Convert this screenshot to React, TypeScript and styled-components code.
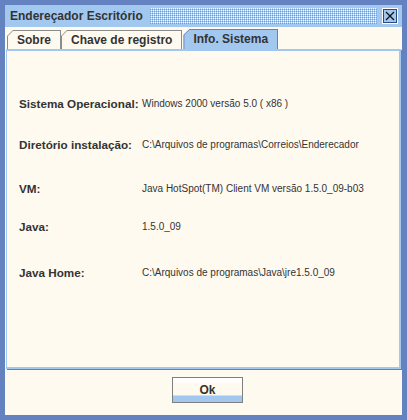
import React from 'react';
import styled, { createGlobalStyle } from 'styled-components';

const C = {
  frame: '#6382BF',
  light: '#A3C8F0',
  cream: '#FFFAEF',
  text: '#333333',
  gray: '#808080',
  tabBorder: '#8C8C8C',
};

const Global = createGlobalStyle`
  html, body { margin: 0; padding: 0; background: #ffffff; }
  body { font-family: "Liberation Sans", Arial, sans-serif; color: ${C.text}; }
`;

const Window = styled.div`
  width: 407px;
  height: 420px;
  box-sizing: border-box;
  background: ${C.frame};
  padding: 5px;
  display: flex;
  flex-direction: column;
`;

const TitleBar = styled.div`
  height: 22px;
  flex: none;
  background: ${C.light};
  display: flex;
  align-items: center;
  padding: 0 4px 0 5px;
`;

const Title = styled.span`
  font-weight: bold;
  font-size: 12px;
  color: ${C.text};
  white-space: nowrap;
`;

const Grip = styled.div`
  flex: 1;
  height: 16px;
  margin: 0 5px 0 7px;
  background: conic-gradient(#ffffff 25%, ${C.light} 0 50%, #7d9fd6 0 75%, ${C.light} 0) 0 0 / 2px 2px;
`;

const CloseButton = styled.div`
  width: 16px;
  height: 16px;
  box-sizing: border-box;
  border: 1px solid #ffffff;
  display: flex;
`;

const CloseInner = styled.div`
  flex: 1;
  border: 1px solid #2b4a7e;
  background: ${C.light};
  display: flex;
  align-items: center;
  justify-content: center;
`;

const Body = styled.div`
  flex: 1;
  background: ${C.cream};
  display: flex;
  flex-direction: column;
`;

const TabRow = styled.div`
  height: 20px;
  margin-top: 2px;
  padding-left: 2px;
  display: flex;
  align-items: flex-end;
  flex: none;
`;

const Tab = styled.div<{ $active?: boolean; $gap?: number }>`
  position: relative;
  height: ${(p) => (p.$active ? 20 : 19)}px;
  margin-left: ${(p) => p.$gap ?? 0}px;
  padding: 0 10px;
  display: flex;
  align-items: center;
  font-weight: bold;
  font-size: 12px;
  color: ${C.text};
  background: ${(p) => (p.$active ? C.frame : C.tabBorder)};
  clip-path: polygon(0 6px, 6px 0, 100% 0, 100% 100%, 0 100%);
  &::before {
    content: '';
    position: absolute;
    inset: 1px 1px 0 1px;
    background: ${(p) => (p.$active ? C.light : C.cream)};
    clip-path: polygon(0 5px, 5px 0, 100% 0, 100% 100%, 0 100%);
  }
`;

const TabLabel = styled.span`
  position: relative;
  white-space: nowrap;
`;

const Panel = styled.div`
  flex: 1;
  margin: 0 1px 1px 1px;
  border-top: 2px solid ${C.light};
  border-left: 1px solid ${C.light};
  border-right: 2px solid ${C.light};
  border-bottom: 2px solid ${C.light};
  box-shadow: 1px 1px 0 ${C.gray};
  padding-left: 12px;
  display: flex;
  flex-direction: column;
`;

const Row = styled.div<{ $gap: number }>`
  display: grid;
  grid-template-columns: 123px 1fr;
  align-items: center;
  height: 14px;
  line-height: 14px;
  margin-top: ${(p) => p.$gap}px;
`;

const Label = styled.span`
  font-weight: bold;
  font-size: 11.7px;
  color: ${C.text};
  white-space: nowrap;
`;

const Value = styled.span`
  font-size: 10px;
  color: ${C.text};
  white-space: nowrap;
`;

const Footer = styled.div`
  height: 45px;
  flex: none;
  display: flex;
  justify-content: center;
  align-items: flex-start;
  padding: 7px 0 0 8px;
  box-sizing: border-box;
`;

const OkButton = styled.button`
  width: 71px;
  height: 26px;
  box-sizing: border-box;
  border: 1px solid #7f7f7f;
  padding: 0;
  margin: 0;
  font-family: "Liberation Sans", Arial, sans-serif;
  font-weight: bold;
  font-size: 12px;
  color: ${C.text};
  background: linear-gradient(
    #ffffff 0px,
    #ffffff 3px,
    ${C.cream} 6px,
    ${C.cream} 17px,
    #d6e2c6 17px,
    #d6e2c6 18px,
    ${C.light} 18px
  );
  display: flex;
  align-items: center;
  justify-content: center;
`;

const rows = [
  { label: 'Sistema Operacional:', value: 'Windows 2000 versão 5.0 ( x86 )', gap: 46 },
  { label: 'Diretório instalação:', value: 'C:\\Arquivos de programas\\Correios\\Enderecador', gap: 27 },
  { label: 'VM:', value: 'Java HotSpot(TM) Client VM versão 1.5.0_09-b03', gap: 30 },
  { label: 'Java:', value: '1.5.0_09', gap: 24 },
  { label: 'Java Home:', value: 'C:\\Arquivos de programas\\Java\\jre1.5.0_09', gap: 32 },
];

export default function App() {
  return (
    <>
      <Global />
      <Window>
        <TitleBar>
          <Title>Endereçador Escritório</Title>
          <Grip />
          <CloseButton>
            <CloseInner>
              <svg width="10" height="10" viewBox="0 0 10 10">
                <path d="M1 1 L9 9 M9 1 L1 9" stroke="#111" strokeWidth="1.3" />
              </svg>
            </CloseInner>
          </CloseButton>
        </TitleBar>
        <Body>
          <TabRow>
            <Tab>
              <TabLabel>Sobre</TabLabel>
            </Tab>
            <Tab>
              <TabLabel>Chave de registro</TabLabel>
            </Tab>
            <Tab $active $gap={1}>
              <TabLabel>Info. Sistema</TabLabel>
            </Tab>
          </TabRow>
          <Panel>
            {rows.map((r) => (
              <Row key={r.label} $gap={r.gap}>
                <Label>{r.label}</Label>
                <Value>{r.value}</Value>
              </Row>
            ))}
          </Panel>
          <Footer>
            <OkButton>Ok</OkButton>
          </Footer>
        </Body>
      </Window>
    </>
  );
}
